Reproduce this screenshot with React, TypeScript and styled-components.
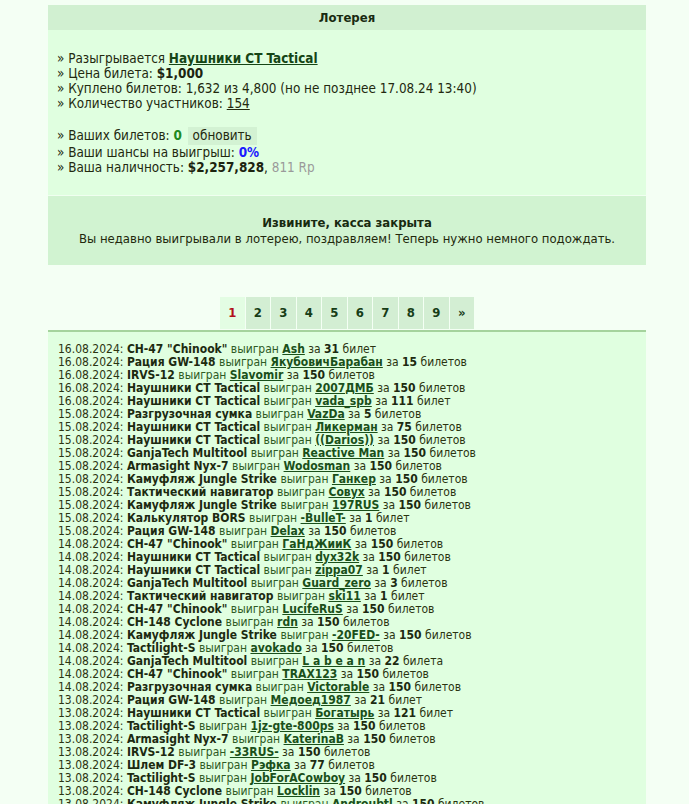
import React from 'react'
import styled, { createGlobalStyle } from 'styled-components'

const GlobalStyle = createGlobalStyle`
  body {
    margin: 0;
    background: #f4fff4;
    font-family: "DejaVu Sans Condensed", "DejaVu Sans", sans-serif;
    color: #23290f;
  }
`

const Page = styled.div`
  width: 598px;
  padding: 5px 0 0 48px;
`

const Title = styled.div`
  height: 25px;
  line-height: 25px;
  background: #d1f0d1;
  text-align: center;
  font-weight: bold;
  font-size: 13px;
  color: #182a10;
`

const Info = styled.div`
  background: #e0ffe0;
  padding: 21px 9px 20px;
  font-size: 13.4px;
  line-height: 15px;
  border-bottom: 1px solid #f0fff0;
`

const Line = styled.div<{ gap?: boolean }>`
  margin-top: ${p => (p.gap ? '16px' : '0')};
`

const Strong = styled.b<{ tone?: string }>`
  color: ${p => p.tone || '#1c2410'};
`

const ItemLink = styled.a`
  font-weight: bold;
  color: #154515;
  text-decoration: underline;
`

const PlainLink = styled.a`
  color: #23290f;
  text-decoration: underline;
`

const Refresh = styled.span`
  display: inline-block;
  background: #d3f2d3;
  padding: 1px 5px 2px;
  margin-left: 2px;
  line-height: 15px;
`

const Muted = styled.span`
  color: #9a9a9a;
`

const Closed = styled.div`
  height: 69px;
  background: #d1f3d1;
  display: flex;
  flex-direction: column;
  justify-content: center;
  align-items: center;
  font-size: 13px;
  line-height: 16px;
  color: #22280c;
  h4 {
    margin: 0;
    font-size: 13px;
    color: #182a10;
  }
`

const Pager = styled.div`
  display: flex;
  justify-content: center;
  gap: 1px;
  margin-top: 32px;
`

const PageCell = styled.a<{ active?: boolean }>`
  width: 24.5px;
  height: 32px;
  line-height: 32px;
  text-align: center;
  font-weight: bold;
  font-size: 13px;
  background: ${p => (p.active ? '#e3fde3' : '#d3eed3')};
  color: ${p => (p.active ? '#b2101c' : '#173d17')};
  text-decoration: none;
`

const Winners = styled.div`
  margin-top: 1px;
  border-top: 2px solid #a5d39d;
  background: #e0ffe0;
  padding: 11px 10px 20px;
  font-size: 12px;
  line-height: 13px;
  white-space: nowrap;
`

const Row = styled.div`
  color: #2b3410;
`

const Prize = styled.b`
  color: #1c2a10;
`

const Won = styled.span`
  color: #2d5a24;
`

const Winner = styled.a`
  font-weight: bold;
  color: #1a501a;
  text-decoration: underline;
`

const Count = styled.b`
  color: #1c2a10;
`

type Win = [string, string, string, number, string]

const wins: Win[] = [
  ['16.08.2024', 'CH-47 "Chinook"', 'Ash', 31, 'билет'],
  ['16.08.2024', 'Рация GW-148', 'ЯкубовичБарабан', 15, 'билетов'],
  ['16.08.2024', 'IRVS-12', 'Slavomir', 150, 'билетов'],
  ['16.08.2024', 'Наушники CT Tactical', '2007ДМБ', 150, 'билетов'],
  ['16.08.2024', 'Наушники CT Tactical', 'vada_spb', 111, 'билет'],
  ['15.08.2024', 'Разгрузочная сумка', 'VazDa', 5, 'билетов'],
  ['15.08.2024', 'Наушники CT Tactical', 'Ликерман', 75, 'билетов'],
  ['15.08.2024', 'Наушники CT Tactical', '((Darios))', 150, 'билетов'],
  ['15.08.2024', 'GanjaTech Multitool', 'Reactive Man', 150, 'билетов'],
  ['15.08.2024', 'Armasight Nyx-7', 'Wodosman', 150, 'билетов'],
  ['15.08.2024', 'Камуфляж Jungle Strike', 'Ганкер', 150, 'билетов'],
  ['15.08.2024', 'Тактический навигатор', 'Совух', 150, 'билетов'],
  ['15.08.2024', 'Камуфляж Jungle Strike', '197RUS', 150, 'билетов'],
  ['15.08.2024', 'Калькулятор BORS', '-BulleT-', 1, 'билет'],
  ['15.08.2024', 'Рация GW-148', 'Delax', 150, 'билетов'],
  ['14.08.2024', 'CH-47 "Chinook"', 'ГаНдЖииК', 150, 'билетов'],
  ['14.08.2024', 'Наушники CT Tactical', 'dyx32k', 150, 'билетов'],
  ['14.08.2024', 'Наушники CT Tactical', 'zippa07', 1, 'билет'],
  ['14.08.2024', 'GanjaTech Multitool', 'Guard_zero', 3, 'билетов'],
  ['14.08.2024', 'Тактический навигатор', 'ski11', 1, 'билет'],
  ['14.08.2024', 'CH-47 "Chinook"', 'LucifeRuS', 150, 'билетов'],
  ['14.08.2024', 'CH-148 Cyclone', 'rdn', 150, 'билетов'],
  ['14.08.2024', 'Камуфляж Jungle Strike', '-20FED-', 150, 'билетов'],
  ['14.08.2024', 'Tactilight-S', 'avokado', 150, 'билетов'],
  ['14.08.2024', 'GanjaTech Multitool', 'L a b e a n', 22, 'билета'],
  ['14.08.2024', 'CH-47 "Chinook"', 'TRAX123', 150, 'билетов'],
  ['14.08.2024', 'Разгрузочная сумка', 'Victorable', 150, 'билетов'],
  ['13.08.2024', 'Рация GW-148', 'Медоед1987', 21, 'билет'],
  ['13.08.2024', 'Наушники CT Tactical', 'Богатырь', 121, 'билет'],
  ['13.08.2024', 'Tactilight-S', '1jz-gte-800ps', 150, 'билетов'],
  ['13.08.2024', 'Armasight Nyx-7', 'KaterinaB', 150, 'билетов'],
  ['13.08.2024', 'IRVS-12', '-33RUS-', 150, 'билетов'],
  ['13.08.2024', 'Шлем DF-3', 'Рэфка', 77, 'билетов'],
  ['13.08.2024', 'Tactilight-S', 'JobForACowboy', 150, 'билетов'],
  ['13.08.2024', 'CH-148 Cyclone', 'Locklin', 150, 'билетов'],
  ['13.08.2024', 'Камуфляж Jungle Strike', 'Androubtl', 150, 'билетов'],
]

const pages = ['1', '2', '3', '4', '5', '6', '7', '8', '9', '»']

const App = () => {
  return (
    <Page>
      <GlobalStyle />
      <Title>Лотерея</Title>
      <Info>
        <Line>» Разыгрывается <ItemLink href="#">Наушники CT Tactical</ItemLink></Line>
        <Line>» Цена билета: <Strong>$1,000</Strong></Line>
        <Line>» Куплено билетов: 1,632 из 4,800 (но не позднее 17.08.24 13:40)</Line>
        <Line>» Количество участников: <PlainLink href="#">154</PlainLink></Line>
        <Line gap>» Ваших билетов: <Strong tone="#1f8a1f">0</Strong> <Refresh>обновить</Refresh></Line>
        <Line>» Ваши шансы на выигрыш: <Strong tone="#1a1aff">0%</Strong></Line>
        <Line>» Ваша наличность: <Strong>$2,257,828</Strong>, <Muted>811 Rp</Muted></Line>
      </Info>
      <Closed>
        <h4>Извините, касса закрыта</h4>
        <div>Вы недавно выигрывали в лотерею, поздравляем! Теперь нужно немного подождать.</div>
      </Closed>
      <Pager>
        {pages.map((p, i) => (
          <PageCell key={p} href="#" active={i === 0}>{p}</PageCell>
        ))}
      </Pager>
      <Winners>
        {wins.map(([date, prize, who, n, word], i) => (
          <Row key={i}>
            {date}: <Prize>{prize}</Prize> <Won>выигран</Won> <Winner href="#">{who}</Winner> за <Count>{n}</Count> {word}
          </Row>
        ))}
      </Winners>
    </Page>
  )
}

export default App
